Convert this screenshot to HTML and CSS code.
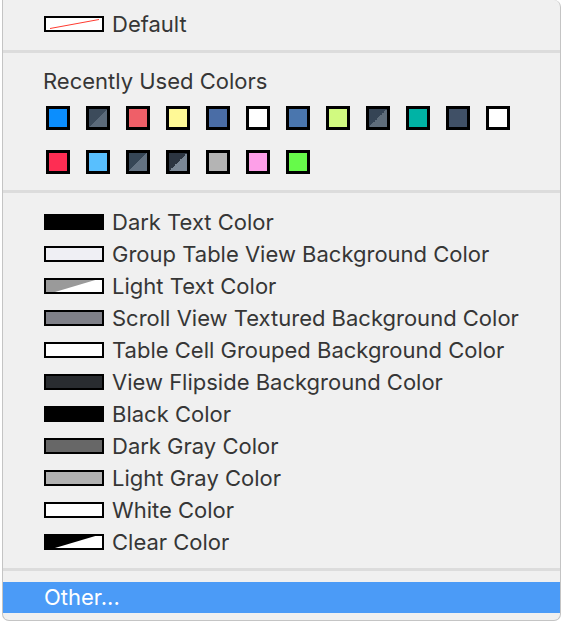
FILE: index.html
```html
<!DOCTYPE html>
<html>
<head>
<meta charset="utf-8">
<link rel="stylesheet" href="styles.css">
</head>
<body>
<div class="menu">
  <div class="item">
    <span class="sw sw-default"><svg width="56" height="10" viewBox="0 0 56 10"><line x1="4" y1="9.5" x2="53" y2="0.5" stroke="#ff3b30" stroke-width="1"/></svg></span>
    <span class="label">Default</span>
  </div>
  <div class="sep"></div>
  <div class="header">Recently Used Colors</div>
  <div class="grid">
    <span class="chip c-blue"></span>
    <span class="chip c-diag1"></span>
    <span class="chip c-red"></span>
    <span class="chip c-yellow"></span>
    <span class="chip c-navy"></span>
    <span class="chip c-white"></span>
    <span class="chip c-navy2"></span>
    <span class="chip c-lime"></span>
    <span class="chip c-diag2"></span>
    <span class="chip c-teal"></span>
    <span class="chip c-slate"></span>
    <span class="chip c-white"></span>
    <span class="chip c-pink"></span>
    <span class="chip c-sky"></span>
    <span class="chip c-diag3"></span>
    <span class="chip c-diag4"></span>
    <span class="chip c-gray"></span>
    <span class="chip c-rose"></span>
    <span class="chip c-green"></span>
  </div>
  <div class="sep sep-2"></div>
  <div class="item"><span class="sw s-black"></span><span class="label">Dark Text Color</span></div>
  <div class="item"><span class="sw s-group"></span><span class="label">Group Table View Background Color</span></div>
  <div class="item"><span class="sw s-half s-lighttext"></span><span class="label">Light Text Color</span></div>
  <div class="item"><span class="sw s-scroll"></span><span class="label">Scroll View Textured Background Color</span></div>
  <div class="item"><span class="sw s-white"></span><span class="label">Table Cell Grouped Background Color</span></div>
  <div class="item"><span class="sw s-flip"></span><span class="label">View Flipside Background Color</span></div>
  <div class="item"><span class="sw s-black"></span><span class="label">Black Color</span></div>
  <div class="item"><span class="sw s-darkgray"></span><span class="label">Dark Gray Color</span></div>
  <div class="item"><span class="sw s-lightgray"></span><span class="label">Light Gray Color</span></div>
  <div class="item"><span class="sw s-white"></span><span class="label">White Color</span></div>
  <div class="item"><span class="sw s-half s-clear"></span><span class="label">Clear Color</span></div>
  <div class="sep sep-3"></div>
  <div class="other">Other...</div>
</div>
</body>
</html>
```

FILE: styles.css
```css
html, body {
  margin: 0;
  padding: 0;
  background: #ffffff;
}

body {
  font-family: Inter, "Liberation Sans", sans-serif;
  font-size: 22px;
  color: #363636;
}

.menu {
  width: 557px;
  height: 612px;
  margin-left: 2px;
  padding-top: 8px;
  background: #f0f0f0;
  border: 1px solid #c4c4c4;
  border-top: none;
  border-radius: 0 7px 7px 7px;
  display: flex;
  flex-direction: column;
}

.item {
  height: 32px;
  display: flex;
  align-items: center;
  padding-left: 41px;
  gap: 8px;
  flex: none;
}

.label {
  line-height: 32px;
  white-space: nowrap;
}

.sw {
  width: 56px;
  height: 12px;
  border: 2px solid #000;
  background: #fff;
  flex: none;
  position: relative;
  overflow: hidden;
  display: block;
}

.sw svg {
  display: block;
  margin-top: 1px;
}

.sep {
  height: 3px;
  background: #dcdcdc;
  margin: 10px 0 12px;
  flex: none;
}

.sep-2 {
  margin: 16px 0 13px;
}

.sep-3 {
  margin: 10px 0 11px;
}

.header {
  height: 32px;
  line-height: 32px;
  padding-left: 40px;
  flex: none;
}

.grid {
  margin-top: 9px;
  padding-left: 43px;
  display: grid;
  grid-template-columns: repeat(12, 24px);
  column-gap: 16px;
  row-gap: 20px;
  flex: none;
}

.chip {
  width: 18px;
  height: 18px;
  border: 3px solid #000;
  display: block;
}

.c-blue { background: #0b8efe; }
.c-red { background: #ef5f68; }
.c-yellow { background: #fff996; }
.c-navy { background: #4a6da6; }
.c-white { background: #ffffff; }
.c-navy2 { background: #4a76ae; }
.c-lime { background: #d1fa80; }
.c-teal { background: #00b3a5; }
.c-slate { background: #405066; }
.c-pink { background: #fe2d53; }
.c-sky { background: #58bffe; }
.c-gray { background: #b4b4b4; }
.c-rose { background: #fd9fe8; }
.c-green { background: #66fa4a; }
.c-diag1 { background: linear-gradient(to bottom right, #3c4b5b 50%, #5b6a7a 50%); }
.c-diag2 { background: linear-gradient(to bottom right, #354455 50%, #5f6d7b 50%); }
.c-diag3 { background: linear-gradient(to bottom right, #364656 50%, #637282 50%); }
.c-diag4 { background: linear-gradient(to bottom right, #2c3541 50%, #7a8795 50%); }

.s-black { background: #000; }
.s-group { background: #efeff4; }
.s-scroll { background: #7f8088; }
.s-white { background: #fff; }
.s-flip { background: #292c30; }
.s-darkgray { background: #676767; }
.s-lightgray { background: #b2b2b2; }

.s-half::before {
  content: "";
  position: absolute;
  inset: 0;
  clip-path: polygon(0 0, 88% 0, 16% 100%, 0 100%);
}

.s-lighttext::before { background: #9a9a9a; }
.s-clear::before { background: #000; }

.other {
  height: 31px;
  line-height: 31px;
  padding-left: 41px;
  background: #4b9bf7;
  color: #ffffff;
  flex: none;
}
```
